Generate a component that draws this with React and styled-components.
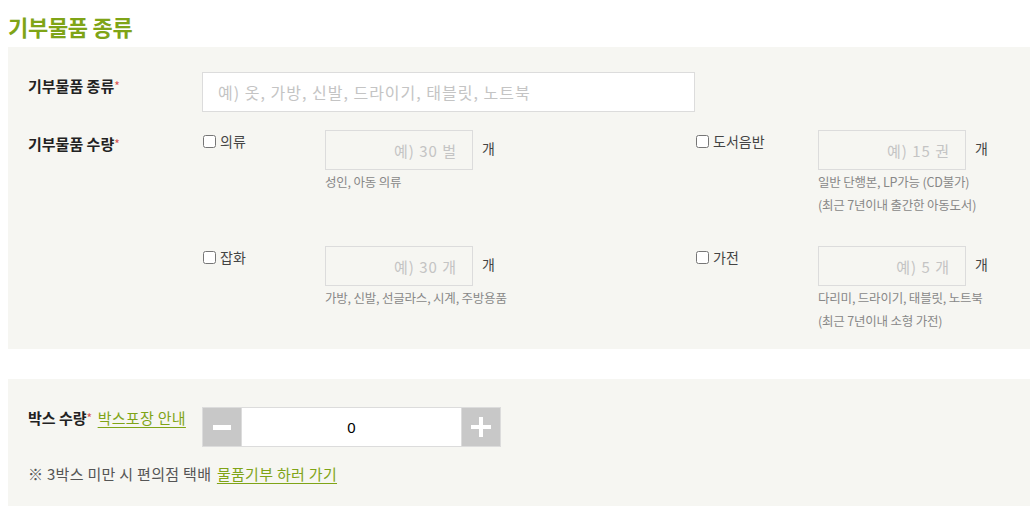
import React, { useState } from "react";
import styled, { createGlobalStyle } from "styled-components";

const GlobalStyle = createGlobalStyle`
  html, body {
    margin: 0;
    background: #ffffff;
    overflow: hidden;
  }
  body {
    padding: 8px;
    font-family: "Noto Sans CJK KR", "Noto Sans", sans-serif;
    color: #333;
  }
  * { box-sizing: border-box; }
`;

const GREEN = "#7fa417";

const items = [
  { name: "의류", ph: "예) 30 벌", hint: ["성인, 아동 의류"] },
  {
    name: "도서음반",
    ph: "예) 15 권",
    hint: ["일반 단행본, LP가능 (CD불가)", "(최근 7년이내 출간한 아동도서)"],
  },
  { name: "잡화", ph: "예) 30 개", hint: ["가방, 신발, 선글라스, 시계, 주방용품"] },
  {
    name: "가전",
    ph: "예) 5 개",
    hint: ["다리미, 드라이기, 태블릿, 노트북", "(최근 7년이내 소형 가전)"],
  },
];

const App = () => {
  const [count, setCount] = useState(0);

  return (
    <>
      <GlobalStyle />
      <Title>기부물품 종류</Title>
      <Panel>
        <FieldRow>
          <Label>
            기부물품 종류<Star>*</Star>
          </Label>
          <TextInput placeholder="예) 옷, 가방, 신발, 드라이기, 태블릿, 노트북" />
        </FieldRow>
        <FieldRow>
          <Label>
            기부물품 수량<Star>*</Star>
          </Label>
          <ItemGrid>
            {items.map((it) => (
              <Item key={it.name}>
                <Check>
                  <input type="checkbox" />
                  <span>{it.name}</span>
                </Check>
                <div>
                  <QtyLine>
                    <QtyInput placeholder={it.ph} />
                    <Unit>개</Unit>
                  </QtyLine>
                  <Hint>
                    {it.hint.map((h) => (
                      <div key={h}>{h}</div>
                    ))}
                  </Hint>
                </div>
              </Item>
            ))}
          </ItemGrid>
        </FieldRow>
      </Panel>

      <Panel $box>
        <FieldRow>
          <Label $tight>
            박스 수량<Star>*</Star> <Link href="#">박스포장 안내</Link>
          </Label>
          <Stepper>
            <StepButton onClick={() => setCount((c) => Math.max(0, c - 1))}>
              <svg width="18" height="18" viewBox="0 0 18 18">
                <rect x="0" y="7" width="18" height="5" fill="#fff" />
              </svg>
            </StepButton>
            <CountInput value={count} readOnly />
            <StepButton onClick={() => setCount((c) => c + 1)}>
              <svg width="20" height="20" viewBox="0 0 20 20">
                <rect x="0" y="8" width="20" height="4" fill="#fff" />
                <rect x="8" y="0" width="4" height="20" fill="#fff" />
              </svg>
            </StepButton>
          </Stepper>
        </FieldRow>
        <Note>
          ※ 3박스 미만 시 편의점 택배 <Link href="#">물품기부 하러 가기</Link>
        </Note>
      </Panel>
    </>
  );
};

export default App;

const Title = styled.h2`
  margin: 0 0 3px;
  height: 36px;
  line-height: 36px;
  font-size: 22px;
  font-weight: 700;
  color: ${GREEN};
  letter-spacing: -0.3px;
`;

const Panel = styled.section`
  width: 1040px;
  background: #f6f6f2;
  padding: ${(p) => (p.$box ? "28px 20px 21px" : "25px 20px 17px")};
  margin-bottom: 30px;
  display: flex;
  flex-direction: column;
  gap: ${(p) => (p.$box ? "16px" : "18px")};
`;

const FieldRow = styled.div`
  display: flex;
  align-items: flex-start;
`;

const Label = styled.div`
  width: 174px;
  flex-shrink: 0;
  padding-top: ${(p) => (p.$tight ? "0" : "3px")};
  font-size: 15px;
  font-weight: 700;
  color: #222;
  line-height: 22px;
`;

const Star = styled.span`
  color: #d9534f;
  font-weight: 400;
  font-size: 12px;
  vertical-align: top;
`;

const TextInput = styled.input`
  width: 493px;
  height: 40px;
  border: 1px solid #dcdcdc;
  background: #fff;
  padding: 0 15px;
  font-size: 16px;
  letter-spacing: 1px;
  font-family: inherit;
  outline: none;
  &::placeholder { color: #c4c4c4; }
`;

const ItemGrid = styled.div`
  display: grid;
  grid-template-columns: 493px 300px;
  row-gap: 30px;
`;

const Item = styled.div`
  display: flex;
  align-items: flex-start;
`;

const Check = styled.label`
  width: 123px;
  display: flex;
  align-items: center;
  gap: 4px;
  padding-top: 1px;
  font-size: 14px;
  color: #444;
  line-height: 20px;
  input {
    margin: 0 0 0 1px;
    width: 13px;
    height: 13px;
  }
`;

const QtyLine = styled.div`
  display: flex;
  align-items: center;
  gap: 9px;
`;

const QtyInput = styled.input`
  width: 148px;
  height: 40px;
  border: 1px solid #dcdcdc;
  background: #f6f6f2;
  padding: 0 15px;
  text-align: right;
  font-size: 15px;
  letter-spacing: 1px;
  font-family: inherit;
  outline: none;
  &::placeholder { color: #c4c4c4; }
`;

const Unit = styled.span`
  font-size: 14px;
  color: #444;
  line-height: 20px;
  margin-bottom: 4px;
`;

const Hint = styled.div`
  margin-top: 0;
  font-size: 12.5px;
  line-height: 23px;
  color: #888;
  letter-spacing: -0.2px;
`;

const Link = styled.a`
  color: ${GREEN};
  font-weight: 400;
  margin-left: 2px;
  text-decoration: underline;
  text-underline-offset: 3px;
  letter-spacing: 0.3px;
`;

const Stepper = styled.div`
  display: flex;
  height: 40px;
`;

const StepButton = styled.button`
  width: 40px;
  height: 40px;
  border: 1px solid #dcdcdc;
  background: #c8c8c8;
  padding: 0;
  display: flex;
  align-items: center;
  justify-content: center;
  cursor: pointer;
`;

const CountInput = styled.input`
  width: 219px;
  height: 40px;
  border: 1px solid #dcdcdc;
  border-left: none;
  border-right: none;
  background: #fff;
  text-align: center;
  font-family: "Liberation Sans", Arial, sans-serif;
  font-size: 15px;
  color: #000;
  outline: none;
`;

const Note = styled.div`
  font-size: 15px;
  color: #555;
  line-height: 22px;
  letter-spacing: 0.3px;
`;
